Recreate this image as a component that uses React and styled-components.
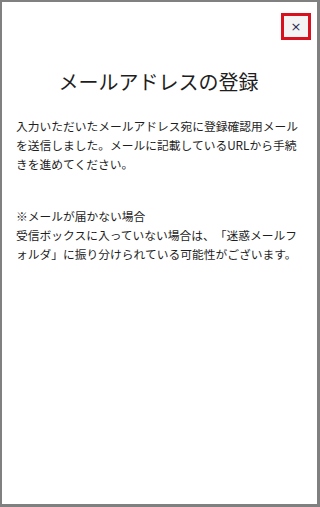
import React from "react";
import styled, { createGlobalStyle } from "styled-components";

const GlobalStyle = createGlobalStyle`
  html, body {
    margin: 0;
    padding: 0;
    background: #808080;
  }
  #root {
    height: 507px;
  }
`;

const Frame = styled.div`
  box-sizing: border-box;
  height: 507px;
  width: 320px;
  background: #fff;
  border-style: solid;
  border-color: #808080;
  border-width: 2px 3px 3px 2px;
  font-family: "Noto Sans CJK JP", "Noto Sans", sans-serif;
  color: #1e1e1e;
  display: flex;
  flex-direction: column;
  text-spacing-trim: space-all;
`;

const Header = styled.div`
  display: flex;
  justify-content: flex-end;
  padding: 11px 6px 0 0;
`;

const CloseButton = styled.button`
  box-sizing: border-box;
  width: 30px;
  height: 27px;
  border: 3px solid #d9101e;
  background: #f4f4f4;
  color: #2d2d5a;
  font-family: "DejaVu Sans", sans-serif;
  font-size: 13px;
  line-height: 1;
  padding: 0;
  cursor: pointer;
  display: flex;
  align-items: center;
  justify-content: center;
`;

const Title = styled.h1`
  margin: 28px 0 0;
  font-size: 20px;
  font-weight: 400;
  line-height: 28px;
  text-align: center;
  padding-right: 2px;
  color: #1e1e1e;
`;

const Body = styled.div`
  padding: 20px 14px 0 14px;
`;

const Paragraph = styled.p`
  margin: ${(p) => (p.$gap ? "33px" : "0")} 0 0;
  font-size: 11.75px;
  line-height: 19px;
  white-space: nowrap;
`;

export default function App() {
  return (
    <>
      <GlobalStyle />
      <Frame>
        <Header>
          <CloseButton aria-label="閉じる">×</CloseButton>
        </Header>
        <Title>メールアドレスの登録</Title>
        <Body>
          <Paragraph>
            入力いただいたメールアドレス宛に登録確認用メール
            <br />
            を送信しました。メールに記載しているURLから手続
            <br />
            きを進めてください。
          </Paragraph>
          <Paragraph $gap>
            ※メールが届かない場合
            <br />
            受信ボックスに入っていない場合は、「迷惑メールフ
            <br />
            ォルダ」に振り分けられている可能性がございます。
          </Paragraph>
        </Body>
      </Frame>
    </>
  );
}
